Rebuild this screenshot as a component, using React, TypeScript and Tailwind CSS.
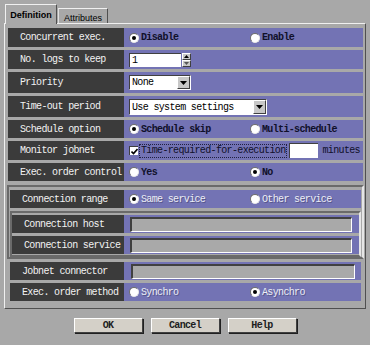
import React from "react";

const mono = "font-['Liberation_Mono','Courier_New',monospace] text-[10px] tracking-[-0.65px]";

function Radio({ checked = false }: { checked?: boolean }) {
  return (
    <span className="w-[10px] h-[10px] shrink-0 rounded-full bg-white border border-[#6c6c6c] border-b-[#e8e8e8] border-r-[#e8e8e8] flex items-center justify-center">
      {checked && <span className="w-[4px] h-[4px] rounded-full bg-black" />}
    </span>
  );
}

function Option({ label, checked = false, disabled = false }: { label: string; checked?: boolean; disabled?: boolean }) {
  return (
    <span className="flex items-center gap-[2px]">
      <Radio checked={checked} />
      <span
        className={
          disabled
            ? "text-[#eceef6] [text-shadow:1px_1px_0_#55558a]"
            : "text-[#10102a] font-bold"
        }
      >
        {label}
      </span>
    </span>
  );
}

function Row({
  label,
  children,
  className = "",
  end = "",
}: {
  label: string;
  children?: React.ReactNode;
  className?: string;
  end?: string;
}) {
  return (
    <div className={`flex ${className}`}>
      <div className="flex-1 bg-[#3b3b3b] text-[#f2f2f2] flex items-center pl-[12px] whitespace-nowrap">
        {label}
      </div>
      <div className={`bg-[#7373b4] flex items-center pl-[5px] ${end}`}>{children}</div>
    </div>
  );
}

function Pair({ a, b, first = true, disabled = false }: { a: string; b: string; first?: boolean; disabled?: boolean }) {
  return (
    <div className="grid grid-cols-[121px_1fr] w-full">
      <Option label={a} checked={first} disabled={disabled} />
      <Option label={b} checked={!first} disabled={disabled} />
    </div>
  );
}

function DownArrow() {
  return (
    <span className="w-[13px] h-full bg-[#c8c8c8] border border-t-white border-l-white border-r-[#404040] border-b-[#404040] flex items-center justify-center">
      <svg width="7" height="4" viewBox="0 0 7 4">
        <path d="M0 0h7L3.5 4z" fill="#000" />
      </svg>
    </span>
  );
}

function GrayInput({ w }: { w: string }) {
  return (
    <div className={`h-[15px] bg-[#a9a9a9] border-t-2 border-l-2 border-t-[#404040] border-l-[#404040] border-b border-r border-b-white border-r-white ${w}`} />
  );
}

function Button({ label }: { label: string }) {
  return (
    <button className="w-[69px] h-[15px] bg-[#d4d0c8] border border-t-white border-l-white border-r-[#404040] border-b-[#404040] shadow-[1px_1px_0_#202020] flex items-center justify-center font-bold text-[#202020]">
      {label}
    </button>
  );
}

export default function App() {
  return (
    <div className={`w-[370px] h-[345px] bg-[#a8a8a8] overflow-hidden ${mono}`}>
      {/* Tabs */}
      <div className="flex items-end h-[23px] pl-[5px] pt-[4px] font-['Liberation_Sans',Arial,sans-serif] tracking-normal text-[9px] text-black">
        <div className="h-[19px] w-[52px] bg-[#a8a8a8] border-t border-l border-t-[#f0f0f0] border-l-[#f0f0f0] border-r border-r-[#505050] flex items-start justify-center pt-[4px] font-bold relative z-10 -mb-[1px] h-[20px]">
          Definition
        </div>
        <div className="h-[15px] w-[50px] border-t border-t-[#f0f0f0] border-l border-l-[#e0e0e0] border-r border-r-[#505050] flex items-start justify-center pt-[3px] ml-[1px]">
          Attributes
        </div>
      </div>

      {/* Panel */}
      <div className="ml-[4px] w-[362px] border border-t-[#f0f0f0] border-l-[#f0f0f0] border-r-[#505050] border-b-[#505050] pt-[4px] pb-[7px]">
        <div className="ml-[3px] mr-[2px] flex flex-col gap-[3px]">
          <Row label="Concurrent exec." className="h-[19px]" end="w-[239px]">
            <Pair a="Disable" b="Enable" />
          </Row>
          <Row label="No. logs to keep" className="h-[19px]" end="w-[239px]">
            <div className="flex items-center h-[14px]">
              <div className="w-[52px] h-[14px] bg-white border-t border-l border-t-[#404040] border-l-[#404040] pl-[2px] leading-[13px] text-black">
                1
              </div>
              <div className="flex flex-col ml-[1px] h-[14px] w-[9px]">
                <span className="h-[7px] bg-[#c8c8c8] border border-t-white border-l-white border-r-[#404040] border-b-[#404040] flex items-center justify-center">
                  <svg width="5" height="3" viewBox="0 0 5 3"><path d="M0 3h5L2.5 0z" fill="#000" /></svg>
                </span>
                <span className="h-[7px] bg-[#c8c8c8] border border-t-white border-l-white border-r-[#404040] border-b-[#404040] flex items-center justify-center">
                  <svg width="5" height="3" viewBox="0 0 5 3"><path d="M0 0h5L2.5 3z" fill="#555" /></svg>
                </span>
              </div>
            </div>
          </Row>
          <Row label="Priority" className="h-[21px]" end="w-[239px]">
            <div className="flex w-[62px] h-[15px] bg-white border-t border-l border-t-[#404040] border-l-[#404040] border-b border-r border-b-white border-r-white">
              <span className="flex-1 pl-[2px] leading-[14px] text-black">None</span>
              <DownArrow />
            </div>
          </Row>
          <Row label="Time-out period" className="h-[21px]" end="w-[239px]">
            <div className="flex w-[138px] h-[16px] bg-white border-t border-l border-t-[#404040] border-l-[#404040] border-b border-r border-b-white border-r-white">
              <span className="flex-1 pl-[2px] leading-[15px] text-black whitespace-nowrap">Use system settings</span>
              <DownArrow />
            </div>
          </Row>
          <Row label="Schedule option" className="h-[18px]" end="w-[239px]">
            <Pair a="Schedule skip" b="Multi-schedule" />
          </Row>
          <Row label="Monitor jobnet" className="h-[19px]" end="w-[239px]">
            <div className="flex items-center whitespace-nowrap">
              <span className="w-[9px] h-[9px] bg-white border-t border-l border-t-[#404040] border-l-[#404040] flex items-center justify-center">
                <svg width="7" height="7" viewBox="0 0 7 7">
                  <path d="M0.5 3.5l2 2L6.5 1" stroke="#000" strokeWidth="1.6" fill="none" />
                </svg>
              </span>
              <span className="ml-[1px] px-[1px] border border-dotted border-[#202040] text-[#10102a] leading-[12px]">
                Time-required-for-execution
              </span>
              <span className="ml-[2px] w-[29px] h-[15px] bg-white border-t border-l border-t-[#404040] border-l-[#404040]" />
              <span className="ml-[4px] text-[#10102a]">minutes</span>
            </div>
          </Row>
          <Row label="Exec. order control" className="h-[18px]" end="w-[239px]">
            <Pair a="Yes" b="No" first={false} />
          </Row>
        </div>

        {/* Connection group */}
        <div className="ml-[2px] mr-[1px] mt-[4px] border-2 border-t-[#6a6a6a] border-l-[#6a6a6a] border-b-[#6a6a6a] border-r-[#e6e6e6] pt-[3px] px-[1px] flex flex-col">
          <Row label="Connection range" className="h-[18px]" end="w-[237px]">
            <Pair a="Same service" b="Other service" disabled />
          </Row>
          <div className="mt-[3px] border-2 border-[#6a6a6a] border-r-[#e6e6e6] pt-[2px] pb-[1px] flex flex-col gap-[3px]">
            <Row label="Connection host" className="h-[18px]" end="w-[235px] pl-[6px]">
              <GrayInput w="w-[222px]" />
            </Row>
            <Row label="Connection service" className="h-[18px]" end="w-[235px] pl-[6px]">
              <GrayInput w="w-[222px]" />
            </Row>
          </div>
        </div>

        <div className="ml-[5px] mr-[4px] mt-[3px] flex flex-col gap-[3px]">
          <Row label="Jobnet connector" className="h-[18px]" end="w-[237px] pl-[7px]">
            <GrayInput w="w-[224px]" />
          </Row>
          <Row label="Exec. order method" className="h-[18px]" end="w-[237px]">
            <Pair a="Synchro" b="Asynchro" first={false} disabled />
          </Row>
        </div>
      </div>

      {/* Buttons */}
      <div className="flex justify-center gap-[8px] mt-[9px]">
        <Button label="OK" />
        <Button label="Cancel" />
        <Button label="Help" />
      </div>
    </div>
  );
}
